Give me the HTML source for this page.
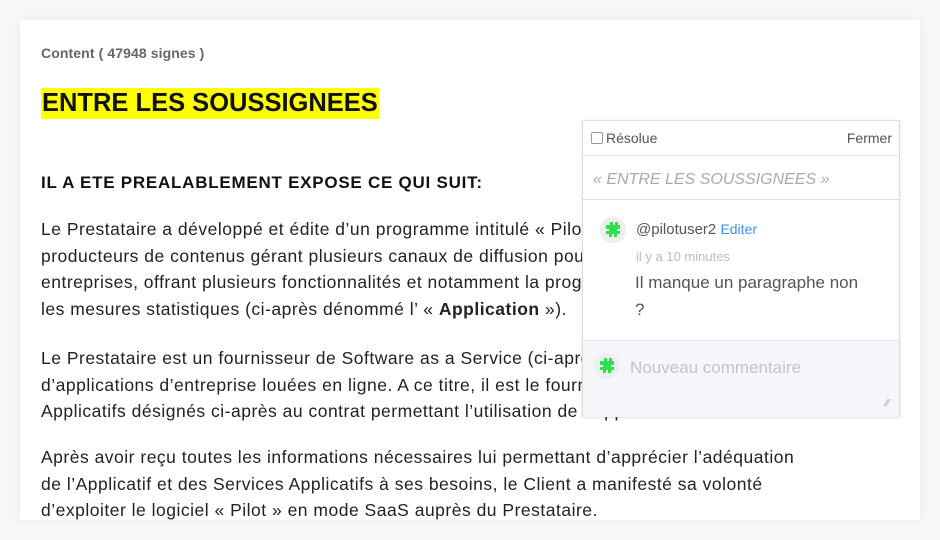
<!DOCTYPE html>
<html><head><meta charset="utf-8"><style>
body{margin:0;width:940px;height:540px;background:#f7f7f7;font-family:"Liberation Sans",sans-serif;overflow:hidden;position:relative}
.card{position:absolute;left:20px;top:20px;width:900px;height:500px;background:#fff;box-shadow:0 0 8px rgba(0,0,0,.06)}
.lbl{position:absolute;left:41px;top:45px;font-size:14px;font-weight:bold;color:#666;letter-spacing:.1px}
h1{position:absolute;left:41px;top:88px;margin:0;font-size:25.5px;line-height:31px;background:#ff0;color:#111;padding:0 1px}
h3{position:absolute;left:41px;top:173px;margin:0;font-size:17px;font-weight:bold;color:#111;letter-spacing:.75px}
.p{position:absolute;left:41px;font-size:17.5px;line-height:26.5px;color:#222;white-space:nowrap;letter-spacing:.5px}
.pop{position:absolute;left:582px;top:120px;width:316px;height:295px;background:#fff;border:1px solid #ddd;box-shadow:0 1px 3px rgba(0,0,0,.12);font-size:14px;color:#555}
.row1{height:34px;border-bottom:1px solid #e6e6e6;position:relative}
.cb{position:absolute;left:8px;top:11px;width:10px;height:10px;border:1px solid #999;border-radius:2px}
.row2{height:43px;border-bottom:1px solid #ddd;position:relative}
.av{position:absolute;width:26px;height:26px;border-radius:50%;background:#eee}
.new{position:absolute;left:0;top:219px;width:316px;height:76px;background:#f4f6f9;border-top:1px solid #e6e6e6}
</style></head><body>
<div class="card"></div>
<div class="lbl">Content ( 47948 signes )</div>
<h1>ENTRE LES SOUSSIGNEES</h1>
<h3>IL A ETE PREALABLEMENT EXPOSE CE QUI SUIT:</h3>
<div class="p" style="top:216px">Le Prestataire a développé et édite d’un programme intitulé « Pilot » destiné aux<br>producteurs de contenus gérant plusieurs canaux de diffusion pour leurs<br>entreprises, offrant plusieurs fonctionnalités et notamment la programmation et<br>les mesures statistiques (ci-après dénommé l’ « <b>Application</b> »).</div>
<div class="p" style="top:345px">Le Prestataire est un fournisseur de Software as a Service (ci-après « SaaS »)<br>d’applications d’entreprise louées en ligne. A ce titre, il est le fournisseur des Services<br>Applicatifs désignés ci-après au contrat permettant l’utilisation de l’Application.</div>
<div class="p" style="top:444px">Après avoir reçu toutes les informations nécessaires lui permettant d’apprécier l’adéquation<br>de l’Applicatif et des Services Applicatifs à ses besoins, le Client a manifesté sa volonté<br>d’exploiter le logiciel « Pilot » en mode SaaS auprès du Prestataire.</div>
<div class="pop">
 <div class="row1"><div class="cb"></div><span style="position:absolute;left:23px;top:9px">Résolue</span><span style="position:absolute;top:9px;right:7px">Fermer</span></div>
 <div class="row2"><span style="position:absolute;left:10px;top:15px;font-size:16px;font-style:italic;color:#aaa">« ENTRE LES SOUSSIGNEES »</span></div>
 <div class="av" style="left:17px;top:96px"><svg width="26" height="26" viewBox="0 0 26 26"><path d="M6 8h4V5h3v3h2V5h3v3h2v4h-3v2h3v3h-3v3h-3v-3h-2v3h-3v-3H6v-3h3v-2H6z" fill="#2ee04f"/></svg></div>
 <span style="position:absolute;left:53px;top:100px;font-size:15px;color:#555">@pilotuser2 <span style="color:#3b8ff5;font-size:14px">Editer</span></span>
 <span style="position:absolute;left:53px;top:128px;font-size:13px;color:#bbb">il y a 10 minutes</span>
 <div style="position:absolute;left:52px;top:148px;font-size:17px;line-height:27px;color:#555">Il manque un paragraphe non<br>?</div>
 <div class="new">
  <div class="av" style="left:11px;top:12px"><svg width="26" height="26" viewBox="0 0 26 26"><path d="M6 8h4V5h3v3h2V5h3v3h2v4h-3v2h3v3h-3v3h-3v-3h-2v3h-3v-3H6v-3h3v-2H6z" fill="#2ee04f"/></svg></div>
  <span style="position:absolute;left:47px;top:17px;font-size:17px;color:#c4c4c4">Nouveau commentaire</span>
  <span style="position:absolute;right:10px;bottom:8px;font-size:10px;color:#999">⁄⁄</span>
 </div>
</div>
</body></html>
